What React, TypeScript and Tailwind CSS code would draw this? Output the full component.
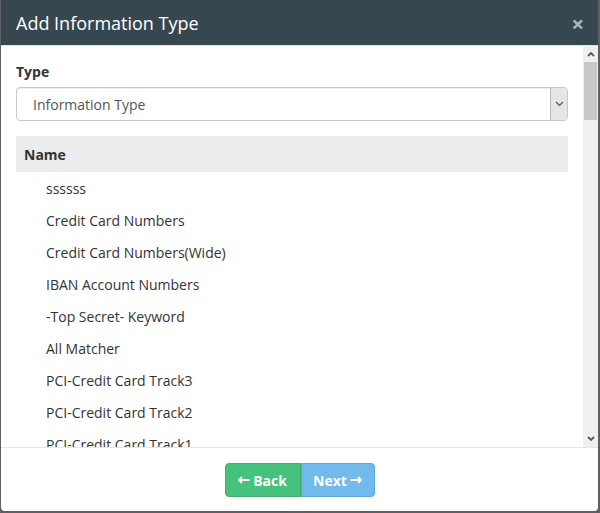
import React from "react";

const rows = [
  "ssssss",
  "Credit Card Numbers",
  "Credit Card Numbers(Wide)",
  "IBAN Account Numbers",
  "-Top Secret- Keyword",
  "All Matcher",
  "PCI-Credit Card Track3",
  "PCI-Credit Card Track2",
  "PCI-Credit Card Track1",
];

export default function App() {
  return (
    <div
      className="w-[600px] h-[513px] bg-[#5d6164] overflow-hidden"
      style={{ fontFamily: '"Open Sans", "Liberation Sans", sans-serif' }}
    >
      <div className="ml-[1px] w-[597px] h-[511px] bg-white rounded-b-[4px] flex flex-col overflow-hidden">
        {/* header */}
        <div className="h-[45px] shrink-0 bg-[#37474f] flex items-center justify-between pl-[15px] pr-[14px]">
          <span className="text-[18px] text-white leading-none">Add Information Type</span>
          <span className="text-[#aeb6ba] text-[22px] font-bold leading-none">×</span>
        </div>
        <div className="h-[1px] bg-[#e5e5e5] shrink-0" />
        {/* body */}
        <div className="flex h-[401px] shrink-0">
          <div className="flex-1 overflow-hidden pl-[15px] pr-[15px] pt-[16px]">
            <div className="text-[14px] font-bold text-[#333] leading-[20px]">Type</div>
            <div className="mt-[5px] h-[34px] border border-[#c8c8c8] rounded-[4px] flex items-center justify-between shadow-[inset_0_1px_1px_rgba(0,0,0,0.075)]">
              <span className="pl-[16px] text-[14px] text-[#555]">Information Type</span>
              <div className="w-[17px] h-[32px] bg-[#e6e6e6] border-l border-[#bbb] rounded-r-[3px] flex items-center justify-center">
                <svg width="9" height="6" viewBox="0 0 9 6">
                  <path d="M1 1 L4.5 4.5 L8 1" stroke="#555" strokeWidth="1.2" fill="none" />
                </svg>
              </div>
            </div>
            <div className="mt-[15px] h-[36px] bg-[#ececec] flex items-center pl-[8px] text-[14px] font-bold text-[#333]">
              Name
            </div>
            <div className="flex flex-col">
              {rows.map((r) => (
                <div key={r} className="h-[32px] flex items-center pl-[30px] text-[14px] text-[#333]">
                  {r}
                </div>
              ))}
            </div>
          </div>
          {/* scrollbar */}
          <div className="w-[15px] bg-[#f0f0f0] flex flex-col shrink-0">
            <div className="h-[16px] flex items-center justify-center">
              <svg width="8" height="6" viewBox="0 0 8 6">
                <path d="M1 5 L4 2 L7 5" stroke="#5a5a5a" strokeWidth="1.8" fill="none" />
              </svg>
            </div>
            <div className="mx-[1px] h-[58px] bg-[#c8c8c8]" />
            <div className="flex-1" />
            <div className="h-[16px] flex items-center justify-center">
              <svg width="8" height="6" viewBox="0 0 8 6">
                <path d="M1 1 L4 4 L7 1" stroke="#5a5a5a" strokeWidth="1.8" fill="none" />
              </svg>
            </div>
          </div>
        </div>
        {/* footer */}
        <div className="h-[1px] bg-[#e5e5e5] shrink-0" />
        <div className="flex-1 flex justify-center pt-[15px]">
          <div className="flex h-[34px]">
            <button className="w-[76px] bg-[#45c27b] border border-[#3db26f] rounded-l-[4px] text-white text-[14px] font-bold flex items-center justify-center gap-[3px]">
              <svg width="12" height="8" viewBox="0 0 12 8">
                <path d="M1 4 H11.5 M4 1 L1 4 L4 7" stroke="#fff" strokeWidth="1.8" fill="none" />
              </svg>
              <span>Back</span>
            </button>
            <button className="w-[74px] bg-[#72b9ec] border border-[#5aa6e0] rounded-r-[4px] text-white text-[14px] font-bold flex items-center justify-center gap-[3px]">
              <span>Next</span>
              <svg width="12" height="8" viewBox="0 0 12 8">
                <path d="M0.5 4 H11 M8 1 L11 4 L8 7" stroke="#fff" strokeWidth="1.8" fill="none" />
              </svg>
            </button>
          </div>
        </div>
      </div>
    </div>
  );
}
